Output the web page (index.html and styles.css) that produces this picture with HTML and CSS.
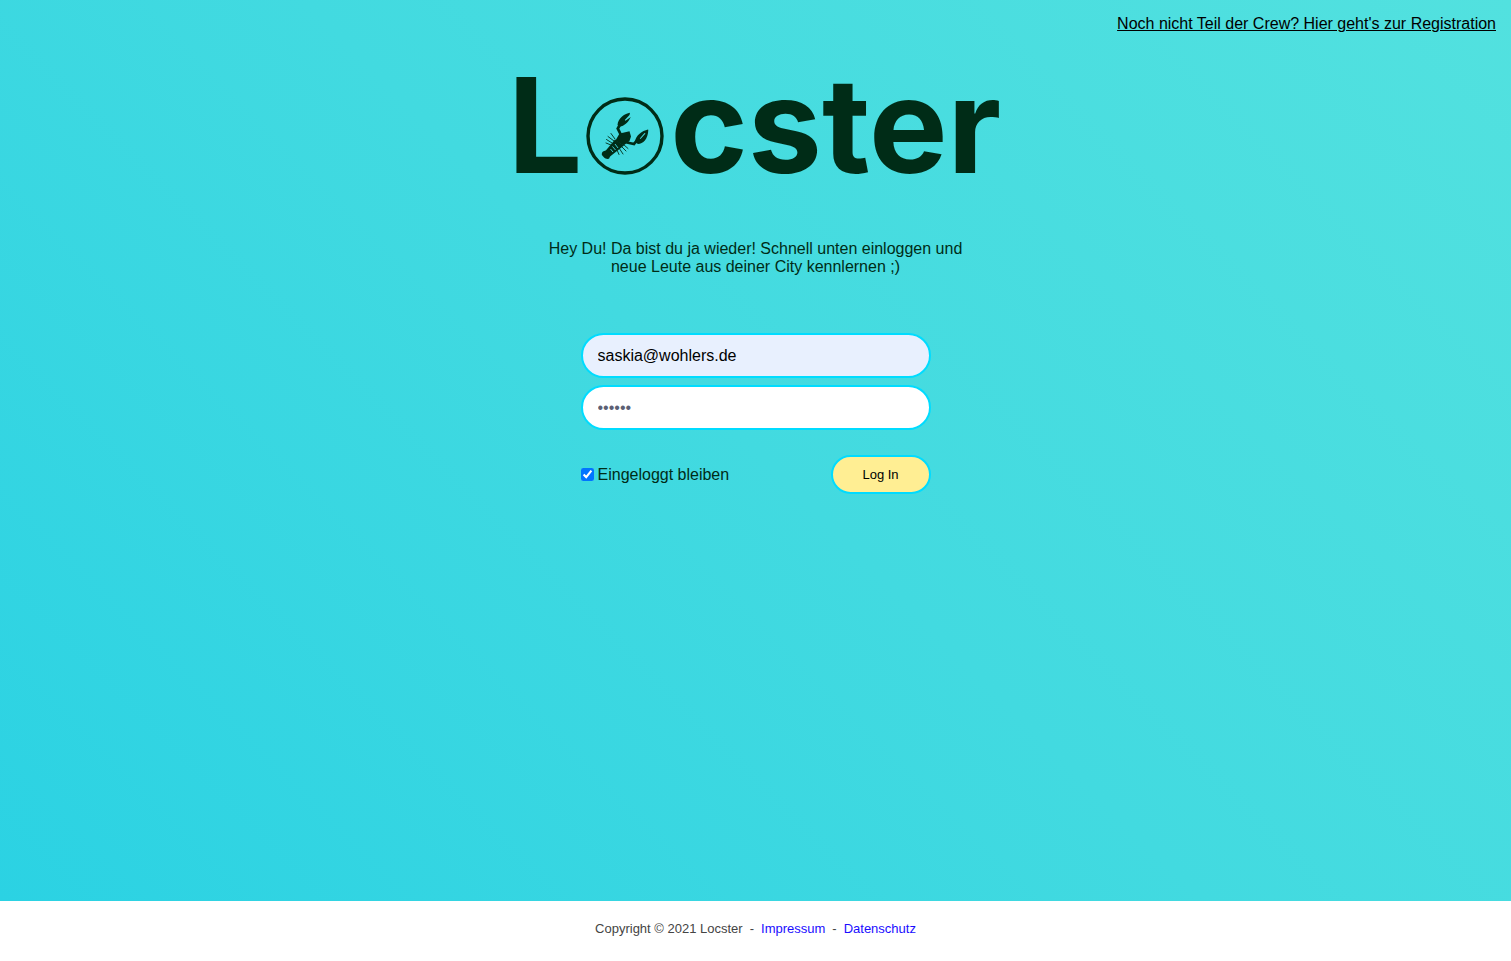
FILE: index.html
```html
<!DOCTYPE html>
<html lang="de">
<head>
<meta charset="utf-8">
<meta name="viewport" content="width=device-width, initial-scale=1">
<title>Locster – Log In</title>
<link rel="stylesheet" href="styles.css">
</head>
<body>
<main class="page">
  <nav class="topbar">
    <a class="register-link" href="#registration">Noch nicht Teil der Crew? Hier geht's zur Registration</a>
  </nav>
  <h1 class="logo">L<svg class="logo-badge" viewBox="0 0 78 78" role="img" aria-label="o">
      <circle cx="39" cy="39" r="37" fill="none" stroke="currentColor" stroke-width="3.4"/>
      <g fill="currentColor">
        <path d="M44 15.800C39 16.500 32 21 31.500 28L34 29.500C38 29 42 26 44.800 20L39.500 23.800L38.800 23L43.500 18Z"/>
        <path d="M62 32.500C56 34 50 38 48.800 45L52 47C57 47 62 42 62.300 33ZM59.500 36.500L54.500 42L53.800 41.500L58.500 36Z"/>
        <path d="M33.500 36.500L37 35.800L43.500 34.200L45 39.500L43.500 44L37.500 48.500L29.500 43.500Z"/>
        <path d="M29 42.500L38 48.500L24 59.500L19 54.500Z"/>
        <path d="M20 53.500C17 54 15.500 55 15.800 58C17.500 59.500 18.500 62.500 23 61.800L25 57.500Z"/>
      </g>
      <g fill="none" stroke="currentColor" stroke-linecap="round">
        <path stroke-width="2.800" d="M33.500 28.500L31.800 31.500L34.500 37M50 44.500L48 47L41 45.500"/>
        <path stroke-width=".9" d="M29 42L25 36.500M28 44L22 39.500M26 46L20.500 42.500M25 48L20 46M37 47L42 51.500M35 49L40 54M33 51L37 57M31 53L33 57.500"/>
      </g>
      <g class="logo-stripes" fill="none" stroke-width=".9">
        <path d="M29 47L32 51M26.500 49.500L29.500 53M24.500 52L27 55"/>
      </g>
    </svg>cster</h1>
  <p class="intro">Hey Du! Da bist du ja wieder! Schnell unten einloggen und neue Leute aus deiner City kennlernen ;)</p>
  <form class="login">
    <input class="field field-filled" type="email" value="saskia@wohlers.de" aria-label="E-Mail">
    <input class="field" type="password" placeholder="••••••" aria-label="Passwort">
    <div class="actions">
      <label class="remember"><input class="check" type="checkbox" checked>Eingeloggt bleiben</label>
      <button class="submit" type="submit">Log In</button>
    </div>
  </form>
</main>
<footer class="footer">
  <span>Copyright © 2021 Locster</span>
  <span>-</span>
  <a href="#impressum">Impressum</a>
  <span>-</span>
  <a href="#datenschutz">Datenschutz</a>
</footer>
</body>
</html>
```
FILE: styles.css
```css
* {
  box-sizing: border-box;
}

body {
  margin: 0;
  min-height: 100vh;
  display: flex;
  flex-direction: column;
  font-family: "Liberation Sans", Arial, sans-serif;
  font-size: 16px;
  line-height: 18px;
  color: #002c17;
  background: #fff;
}

.page {
  flex: 1;
  display: flex;
  flex-direction: column;
  align-items: center;
  background: linear-gradient(45deg, #2bd2e3, #42dae0 50%, #52e1df);
}

.topbar {
  align-self: stretch;
  display: flex;
  justify-content: flex-end;
  padding: 15px 15px 0;
}

.register-link {
  color: #000;
}

.logo {
  margin: 42px 0 0;
  padding-right: 2px;
  font-family: Inter, sans-serif;
  font-size: 132px;
  font-weight: 700;
  line-height: 100px;
  white-space: nowrap;
}

.logo-badge {
  width: 78px;
  height: 78px;
  margin: 0 6px 0 4px;
  vertical-align: -2px;
}

.logo-stripes {
  stroke: #44dae0;
}

.intro {
  max-width: 430px;
  margin: 65px 16px 0;
  text-align: center;
}

.login {
  display: flex;
  flex-direction: column;
  gap: 7px;
  width: 350px;
  max-width: 100%;
  margin: 57px 0 40px;
}

.field {
  width: 100%;
  height: 45px;
  padding: 0 15px;
  border: 2px solid #00dcff;
  border-radius: 24px;
  background: #fff;
  color: #000;
  font: inherit;
}

.field-filled {
  background: #e8f0fe;
}

.field::placeholder {
  color: #5c6074;
  opacity: 1;
}

.actions {
  display: flex;
  justify-content: space-between;
  align-items: center;
  margin-top: 18px;
}

.remember {
  display: flex;
  align-items: center;
  gap: 4px;
}

.check {
  width: 13px;
  height: 13px;
  margin: 0;
  accent-color: #0075ff;
}

.submit {
  width: 100px;
  height: 39px;
  padding: 0;
  border: 2px solid #00dcff;
  border-radius: 20px;
  background: #ffee93;
  color: #000;
  font: inherit;
  font-size: 13px;
}

.footer {
  display: flex;
  justify-content: center;
  gap: 7px;
  padding: 19px 16px 23px;
  font-size: 13px;
  color: #444;
}

.footer a {
  color: #1a0dff;
  text-decoration: none;
}
```
